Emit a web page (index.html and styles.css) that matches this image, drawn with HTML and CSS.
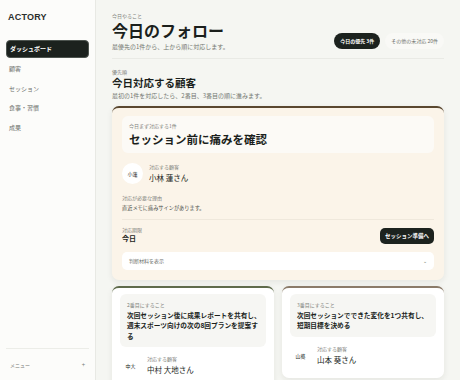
FILE: index.html
```html
<!doctype html>
<html lang="ja">
<head>
  <meta charset="utf-8"/>
  <title>ACTORY ダッシュボード</title>
  <link rel="stylesheet" href="styles.css">
</head>
<body>
  <div id="app">
    <aside class="side">
      <div class="logo">ACTORY</div>
      <nav class="nav">
        <div class="nav-item active">ダッシュボード</div>
        <div class="nav-item">顧客</div>
        <div class="nav-item">セッション</div>
        <div class="nav-item">食事・習慣</div>
        <div class="nav-item">成果</div>
      </nav>
      <div class="side-foot">
        <span>メニュー</span>
        <span class="plus">+</span>
      </div>
    </aside>

    <main class="main">
      <header class="head">
        <div>
          <div class="eyebrow">今日やること</div>
          <h1 class="title">今日のフォロー</h1>
          <div class="sub">最優先の1件から、上から順に対応します。</div>
        </div>
        <div class="tabs">
          <span class="tab on">今日の優先 3件</span>
          <span class="tab">その他の未対応 20件</span>
        </div>
      </header>

      <section class="section">
        <div class="eyebrow">優先順</div>
        <h2 class="h2">今日対応する顧客</h2>
        <div class="sub">最初の1件を対応したら、2番目、3番目の順に進みます。</div>

        <div class="card first">
          <div class="task-box">
            <div class="tiny">今日まず対応する1件</div>
            <div class="task-big">セッション前に痛みを確認</div>
          </div>
          <div class="who">
            <div class="avatar">小蓮</div>
            <div>
              <div class="tiny">対応する顧客</div>
              <div class="name">小林 蓮さん</div>
            </div>
          </div>
          <div class="reason">
            <div class="tiny">対応が必要な理由</div>
            <div class="reason-text">直近メモに痛みサインがあります。</div>
          </div>
          <div class="due">
            <div>
              <div class="tiny">対応期限</div>
              <div class="due-val">今日</div>
            </div>
            <span class="btn">セッション準備へ</span>
          </div>
          <div class="details">
            <span>判断材料を表示</span>
            <span class="caret">⌄</span>
          </div>
        </div>

        <div class="grid">
          <div class="card next green">
            <div class="task-box gray">
              <div class="tiny">2番目にすること</div>
              <div class="task-mid">次回セッション後に成果レポートを共有し、週末スポーツ向けの次の8回プランを提案す<br>る</div>
            </div>
            <div class="who small">
              <div class="avatar">中大</div>
              <div>
                <div class="tiny">対応する顧客</div>
                <div class="name">中村 大地さん</div>
              </div>
            </div>
          </div>
          <div class="card next taupe">
            <div class="task-box gray">
              <div class="tiny">3番目にすること</div>
              <div class="task-mid">次回セッションでできた変化を1つ共有し、短期目標を決める</div>
            </div>
            <div class="who small">
              <div class="avatar">山葵</div>
              <div>
                <div class="tiny">対応する顧客</div>
                <div class="name">山本 葵さん</div>
              </div>
            </div>
          </div>
        </div>
      </section>
    </main>
  </div>
</body>
</html>
```

FILE: styles.css
```css
html, body {
  margin: 0;
  height: 100%;
  overflow: hidden;
  font-family: "Noto Sans CJK JP", "Noto Sans", sans-serif;
  color: #1b1f1c;
  background: #f5f6f2;
}
#app {
  display: flex;
  height: 100%;
}
.side {
  width: 96px;
  flex: none;
  background: #fcfcfa;
  border-right: 1px solid #e8e9e4;
  display: flex;
  flex-direction: column;
  box-sizing: border-box;
}
.logo {
  font-family: "Liberation Sans", sans-serif;
  font-weight: bold;
  font-size: 9px;
  letter-spacing: .2px;
  padding: 12px 8px 0;
  color: #2b2f2c;
}
.nav {
  margin-top: 18px;
  padding: 0 6px;
  flex: 1;
}
.nav-item {
  font-size: 6px;
  color: #6d716c;
  height: 19.5px;
  line-height: 19.5px;
  padding: 0 3px;
}
.nav-item.active {
  background: #1c221e;
  color: #fff;
  font-weight: bold;
  border-radius: 4px;
  border: 1px solid #4d544f;
  height: 16px;
  line-height: 16px;
  margin-bottom: 1px;
}
.side-foot {
  margin: 0 6px;
  border-top: 1px solid #ecede8;
  height: 31px;
  display: flex;
  justify-content: space-between;
  align-items: center;
  font-size: 5px;
  color: #777b76;
  padding: 0 4px;
}
.plus {
  font-size: 6px;
}

.main {
  flex: 1;
  padding: 12px 16px 0;
  overflow: hidden;
}
.head {
  display: flex;
  justify-content: space-between;
  align-items: flex-end;
  padding-bottom: 7px;
  border-bottom: 1px solid #e9eae5;
}
.eyebrow {
  font-size: 5px;
  line-height: 7px;
  color: #7d817b;
}
.title {
  margin: 0;
  font-size: 16px;
  line-height: 1.45;
  font-weight: bold;
}
.sub {
  font-size: 6px;
  line-height: 9px;
  color: #737771;
}
.tabs {
  display: flex;
  gap: 5px;
  margin-bottom: 2px;
}
.tab {
  font-size: 5px;
  padding: 0 6px;
  height: 16px;
  line-height: 16px;
  border-radius: 8px;
  background: #f9f9f6;
  color: #6d716c;
}
.tab.on {
  background: #1c221e;
  color: #fff;
  font-weight: bold;
}

.section {
  padding-top: 9px;
}
.h2 {
  margin: 0 0 1px;
  font-size: 10.5px;
  line-height: 1.45;
  font-weight: bold;
}
.tiny {
  font-size: 5px;
  line-height: 7px;
  color: #7d817b;
}
.card {
  border-radius: 7px;
  box-shadow: 0 2px 6px rgba(40, 40, 30, .08);
  padding: 8px 10px 10px;
}
.first {
  margin-top: 6px;
  background: #fbf4e9;
  border-top: 2px solid #5a4830;
}
.task-box {
  background: #fcfaf6;
  border-radius: 6px;
  padding: 6px 7px 5px;
}
.task-big {
  font-size: 11.5px;
  line-height: 1.4;
  font-weight: bold;
  margin-top: 2px;
}
.who {
  display: flex;
  align-items: center;
  gap: 6px;
  padding: 10px 0 10px;
}
.avatar {
  width: 21px;
  height: 21px;
  border-radius: 50%;
  background: #fff;
  font-size: 5px;
  display: flex;
  align-items: center;
  justify-content: center;
}
.name {
  font-size: 7.5px;
  line-height: 1.4;
  margin-top: 3px;
}
.reason {
  padding-bottom: 8px;
  border-bottom: 1px solid #efe8dc;
}
.reason-text {
  font-size: 5.2px;
  line-height: 1.4;
  color: #4d514c;
  margin-top: 3px;
}
.due {
  display: flex;
  justify-content: space-between;
  align-items: flex-end;
  padding: 6px 0 8px;
}
.due-val {
  font-size: 7px;
  line-height: 1.4;
  font-weight: bold;
  margin-top: 1px;
}
.btn {
  background: #1c221e;
  color: #fff;
  font-size: 5.5px;
  font-weight: bold;
  padding: 0 5px;
  height: 16px;
  line-height: 16px;
  border-radius: 5px;
}
.details {
  background: #fff;
  border-radius: 5px;
  height: 18px;
  display: flex;
  justify-content: space-between;
  align-items: center;
  padding: 0 7px;
  font-size: 5px;
  color: #6d716c;
}
.caret {
  font-size: 5px;
}
.grid {
  display: grid;
  grid-template-columns: 1fr 1fr;
  gap: 8px;
  margin-top: 6px;
  align-items: start;
}
.next {
  background: #fff;
  padding: 6px 8px;
}
.green {
  border-top: 2px solid #5f6b4b;
}
.taupe {
  border-top: 2px solid #8b7b69;
}
.task-box.gray {
  background: #f6f6f3;
  padding: 7px 4px 6px 7px;
}
.task-mid {
  font-size: 6.7px;
  font-weight: bold;
  line-height: 10.5px;
  margin-top: 2px;
}
.who.small {
  padding: 8px 0 6px;
}
```
